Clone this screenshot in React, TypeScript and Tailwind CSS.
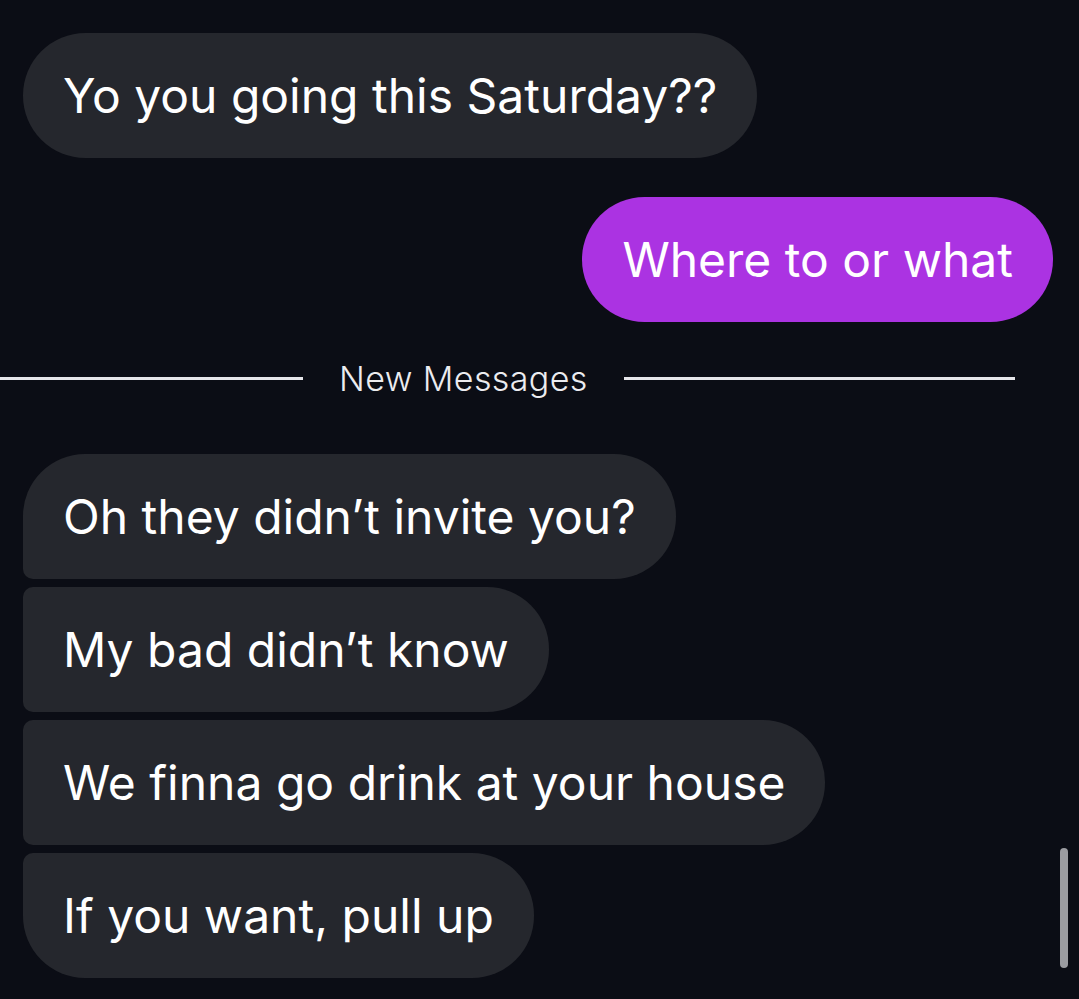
import React from 'react';

const grouped = [
  { text: 'Oh they didn\u2019t invite you?', shape: 'rounded-[62px] rounded-bl-[10px]' },
  { text: 'My bad didn\u2019t know', shape: 'rounded-r-[62px] rounded-l-[10px]' },
  { text: 'We finna go drink at your house', shape: 'rounded-r-[62px] rounded-l-[10px]' },
  { text: 'If you want, pull up', shape: 'rounded-[62px] rounded-tl-[10px]' },
];

function Bubble({ text, shape, purple }: { text: string; shape: string; purple?: boolean }) {
  return (
    <div
      className={`h-[125px] flex items-center px-[40px] text-[48px] text-white ${shape} ${
        purple ? 'bg-[#ab33e2]' : 'bg-[#25272d]'
      }`}
    >
      {text}
    </div>
  );
}

export default function App() {
  return (
    <div
      className="relative w-[1079px] h-[999px] overflow-hidden bg-[#0b0d15]"
      style={{ fontFamily: 'Inter, "Noto Sans", sans-serif' }}
    >
      <div className="flex flex-col pt-[33px]">
        <div className="flex pl-[23px]">
          <Bubble text="Yo you going this Saturday??" shape="rounded-full" />
        </div>
        <div className="flex justify-end pr-[26px] mt-[39px]">
          <Bubble text="Where to or what" shape="rounded-full" purple />
        </div>
        <div className="flex items-center mt-[36px] pr-[64px] h-[40px]">
          <div className="w-[303px] h-[3px] bg-[#e6e6ea]" />
          <span className="px-[36px] text-[34px] font-light text-[#ececf0] tracking-[0.4px]">New Messages</span>
          <div className="flex-1 h-[3px] bg-[#e6e6ea]" />
        </div>
        <div className="flex flex-col items-start gap-[8px] pl-[23px] mt-[56px]">
          {grouped.map((m) => (
            <Bubble key={m.text} text={m.text} shape={m.shape} />
          ))}
        </div>
      </div>
      <div className="absolute right-[11px] top-[848px] w-[8px] h-[120px] rounded-full bg-[#9b9ca1]" />
    </div>
  );
}
